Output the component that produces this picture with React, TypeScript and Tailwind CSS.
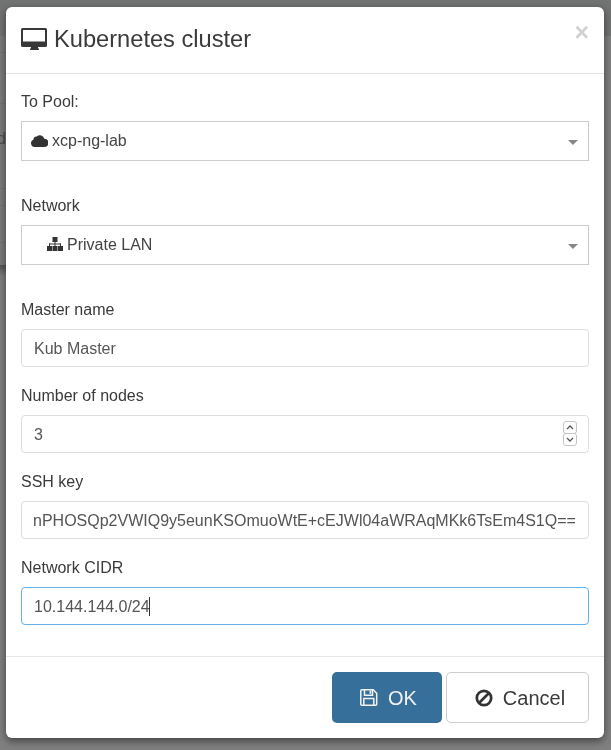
const font = "font-['Liberation_Sans',Arial,sans-serif]";

function Label({ children }: { children: string }) {
  return <label className="block text-[16px] leading-[23px] text-[#3a3a3a] mb-[8px]">{children}</label>;
}

function TextInput({ value, focused, shift }: { value: string; focused?: boolean; shift?: boolean }) {
  return (
    <div
      className={
        "h-[38px] rounded-[4px] border px-[12px] pt-px flex items-center text-[16px] text-[#555] bg-white overflow-hidden whitespace-nowrap " +
        (focused ? "border-[#66afe9]" : "border-[#ddd]")
      }
    >
      <span className={shift ? "-ml-px" : ""}>{value}</span>
      {focused && <span className="inline-block w-px h-[19px] bg-[#333] -ml-px" />}
    </div>
  );
}

function Select({ icon, text, indent }: { icon: React.ReactNode; text: string; indent: string }) {
  return (
    <div className={"h-[40px] border border-[#ccc] bg-white flex items-center text-[16px] text-[#444] relative " + indent}>
      {icon}
      <span>{text}</span>
      <span className="absolute right-[10px] top-[18px] w-0 h-0 border-x-[5px] border-x-transparent border-t-[5px] border-t-[#888]" />
    </div>
  );
}

function BackdropRow({ h, line }: { h: string; line?: boolean }) {
  return <div className={h + (line ? " border-b border-[#737373]" : "")} />;
}

function DesktopIcon() {
  return (
    <svg width="26" height="22" viewBox="0 0 26 22" className="mr-[7px] -mt-[3px]" aria-hidden="true">
      <path
        fill="#383838"
        fillRule="evenodd"
        d="M1.5 0h23A1.5 1.5 0 0 1 26 1.5v16a1.5 1.5 0 0 1-1.5 1.5H17v1.4h1V22H9v-1.6h1V19H1.5A1.5 1.5 0 0 1 0 17.5v-16A1.5 1.5 0 0 1 1.5 0zM2 2v11.5h22V2z"
      />
    </svg>
  );
}

function CloudIcon() {
  return (
    <svg width="17" height="14" viewBox="0 0 17 14" className="mr-[4px] -mt-[2px]" aria-hidden="true">
      <path
        fill="#333"
        d="M3.8 14A3.8 3.8 0 0 1 2.6 6.6 A2.6 2.6 0 0 1 5.8 3.6 A4.4 4.4 0 0 1 13.3 5.8 A4.1 4.1 0 0 1 13.2 14Z"
      />
    </svg>
  );
}

function SitemapIcon() {
  return (
    <svg width="16" height="14" viewBox="0 0 16 14" className="mr-[4px] -mt-[2px]" aria-hidden="true">
      <g fill="#333">
        <rect x="5.5" y="0" width="5" height="5" />
        <rect x="0" y="9" width="5" height="5" />
        <rect x="5.5" y="9" width="5" height="5" />
        <rect x="11" y="9" width="5" height="5" />
        <rect x="7.5" y="5" width="1" height="4" />
        <rect x="2" y="6.5" width="12" height="1" />
        <rect x="2" y="6.5" width="1" height="2.5" />
        <rect x="13" y="6.5" width="1" height="2.5" />
      </g>
    </svg>
  );
}

function SaveIcon() {
  return (
    <svg width="18" height="17" viewBox="0 0 18 17" aria-hidden="true">
      <g fill="none" stroke="#f2f2f2" strokeWidth="1.5">
        <path d="M1.8 0.8H13.2L16.7 4.3V15.2a1 1 0 0 1-1 1H1.8a1 1 0 0 1-1-1V1.8a1 1 0 0 1 1-1z" />
        <path d="M4.5 1V6.2H12.5V1" />
        <path d="M3.8 16V9.5H13.8V16" />
      </g>
      <rect x="9.6" y="1.6" width="1.6" height="3.2" fill="#f2f2f2" />
    </svg>
  );
}

function BanIcon() {
  return (
    <svg width="18" height="18" viewBox="0 0 18 18" aria-hidden="true">
      <circle cx="9" cy="9" r="7.2" fill="none" stroke="#333" strokeWidth="2.7" />
      <path d="M4 14L14 4" stroke="#333" strokeWidth="2.7" />
    </svg>
  );
}

export default function App() {
  return (
    <div className={"relative w-[611px] h-[750px] bg-[#808080] pt-[7px] pl-[6px] overflow-hidden " + font}>
      <div className="absolute inset-0 flex flex-col">
        <div className="h-[36px] bg-[#727473] shrink-0" />
        <div className="w-[6px] flex flex-col bg-[#7c7c7c]">
          <BackdropRow h="h-[17px]" line />
          <BackdropRow h="h-[51px]" line />
          <div className="h-[85px] border-b border-[#737373] overflow-hidden relative">
            <span className="absolute right-0 top-[26px] text-[16px] leading-[18px] text-[#4e4e4e]">nd</span>
          </div>
          <BackdropRow h="h-[17px]" line />
          <BackdropRow h="h-[37px]" line />
          <BackdropRow h="h-[22px]" />
          <div className="h-[11px] bg-gradient-to-b from-[#555] to-[#7f7f7f]" />
        </div>
      </div>
      <div className="relative w-[598px] h-[731px] bg-white rounded-[6px] shadow-[0_3px_9px_rgba(0,0,0,0.5)] flex flex-col [will-change:transform]">
        <header className="h-[67px] border-b border-[#e5e5e5] flex items-center pl-[15px] pr-[15px] relative shrink-0">
          <DesktopIcon />
          <h4 className="text-[23.65px] text-[#3a3a3a] leading-[26px] -mt-[2px]">Kubernetes cluster</h4>
          <span className="absolute right-[15px] top-[13px] text-[25px] font-bold leading-[24px] text-[#d2d2d2]">×</span>
        </header>
        <div className="px-[15px] pt-[16px] flex-1">
          <Label>To Pool:</Label>
          <Select indent="pl-[9px]" icon={<CloudIcon />} text="xcp-ng-lab" />
          <div className="h-[33px]" />
          <Label>Network</Label>
          <Select indent="pl-[25px]" icon={<SitemapIcon />} text="Private LAN" />
          <div className="h-[33px]" />
          <Label>Master name</Label>
          <TextInput value="Kub Master" />
          <div className="h-[17px]" />
          <Label>Number of nodes</Label>
          <div className="relative">
            <TextInput value="3" />
            <div className="absolute right-[12px] top-[6px] flex flex-col items-center">
              <span className="w-[14px] h-[13px] border border-[#c4c4c4] rounded-[3px] flex items-center justify-center bg-white">
                <svg width="8" height="5" viewBox="0 0 8 5"><path d="M1 4 L4 1 L7 4" fill="none" stroke="#555" strokeWidth="1.3" /></svg>
              </span>
              <span className="w-[14px] h-[13px] border border-[#c4c4c4] rounded-[3px] flex items-center justify-center bg-white -mt-px">
                <svg width="8" height="5" viewBox="0 0 8 5"><path d="M1 1 L4 4 L7 1" fill="none" stroke="#555" strokeWidth="1.3" /></svg>
              </span>
            </div>
          </div>
          <div className="h-[17px]" />
          <Label>SSH key</Label>
          <TextInput value="nPHOSQp2VWIQ9y5eunKSOmuoWtE+cEJWl04aWRAqMKk6TsEm4S1Q==" shift />
          <div className="h-[17px]" />
          <Label>Network CIDR</Label>
          <TextInput value="10.144.144.0/24" focused />
        </div>
        <footer className="h-[82px] shrink-0 border-t border-[#e5e5e5] flex justify-end items-start gap-[4px] pt-[15px] pr-[15px]">
          <button className="w-[110px] h-[51px] pl-[3px] rounded-[5px] bg-[#366f99] text-[#f2f2f2] text-[20px] flex items-center justify-center gap-[10px]">
            <SaveIcon />
            OK
          </button>
          <button className="w-[143px] h-[51px] pl-[5px] rounded-[5px] border border-[#ccc] bg-white text-[#3a3a3a] text-[20px] flex items-center justify-center gap-[10px]">
            <BanIcon />
            Cancel
          </button>
        </footer>
      </div>
    </div>
  );
}
